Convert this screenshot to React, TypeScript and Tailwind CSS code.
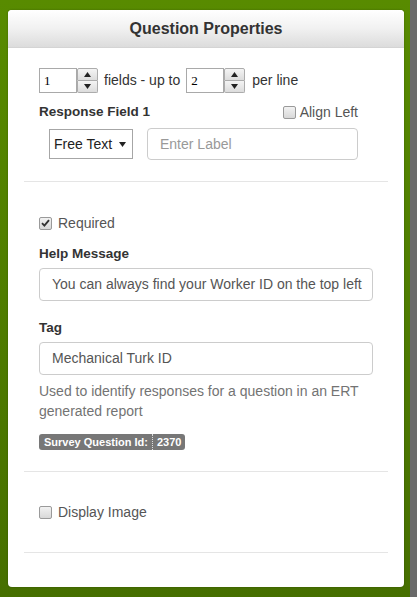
import React from 'react';

function Spinner({ value }: { value: string }) {
  return (
    <div className="flex h-[25px]">
      <div className="w-[38px] h-[25px] border border-[#a9a9a9] bg-white pl-[4px] text-[13px] leading-[23px] text-black font-['Liberation_Serif',serif]">
        {value}
      </div>
      <div className="flex flex-col w-[21px] h-[25px]">
        <div className="flex-1 flex items-center justify-center border border-[#acacac] bg-gradient-to-b from-[#f4f4f4] to-[#dcdcdc] rounded-t-[2px]">
          <svg width="7" height="5" viewBox="0 0 7 5"><path d="M3.5 0L7 5H0z" fill="#222" /></svg>
        </div>
        <div className="flex-1 flex items-center justify-center border border-t-0 border-[#acacac] bg-gradient-to-b from-[#f4f4f4] to-[#dcdcdc] rounded-b-[2px]">
          <svg width="7" height="5" viewBox="0 0 7 5"><path d="M0 0H7L3.5 5z" fill="#222" /></svg>
        </div>
      </div>
    </div>
  );
}

function Checkbox({ checked }: { checked?: boolean }) {
  return (
    <div className="w-[13px] h-[13px] rounded-[2px] border border-[#9a9a9a] bg-gradient-to-b from-[#f2f2f2] to-[#d8d8d8] flex items-center justify-center">
      {checked && (
        <svg width="9" height="8" viewBox="0 0 9 8">
          <path d="M1 4.2L3.4 6.6L8 1.2" stroke="#333" strokeWidth="1.9" fill="none" />
        </svg>
      )}
    </div>
  );
}

function TextInput({ value, placeholder, className = '' }: { value?: string; placeholder?: string; className?: string }) {
  return (
    <div className={`border border-[#cccccc] rounded-[4px] bg-white px-[12px] flex items-center text-[14px] whitespace-nowrap overflow-hidden ${className}`}>
      {value ? <span className="text-[#555555]">{value}</span> : <span className="text-[#999999]">{placeholder}</span>}
    </div>
  );
}

export default function App() {
  return (
    <div className="flex w-[417px] h-[597px] overflow-hidden font-['Liberation_Sans',Arial,sans-serif]">
      <div className="w-[410px] h-full bg-gradient-to-b from-[#588b00] to-[#466f00] pl-[8px] pt-[10px]">
        <div className="w-[396px] h-[577px] bg-white rounded-[4px] overflow-hidden shadow-[0_0_2px_rgba(0,0,0,0.3)]">
          {/* Header */}
          <div className="h-[38px] bg-gradient-to-b from-[#ffffff] via-[#f1f1f1] to-[#dcdcdc] border-b border-[#d4d4d4] flex items-center justify-center">
            <h2 className="text-[16px] font-bold text-[#333333]">Question Properties</h2>
          </div>

          <div className="px-[16px]">
            {/* Fields section */}
            <div className="px-[15px]">
              <div className="mt-[20px] flex items-center text-[14px] text-[#333333]">
                <Spinner value="1" />
                <span className="ml-[6px] mr-[6px]">fields - up to</span>
                <Spinner value="2" />
                <span className="ml-[7px]">per line</span>
              </div>

              <div className="mt-[9px] h-[20px] flex items-start justify-between">
                <span className="text-[13.5px] font-bold text-[#333333] leading-[20px]">Response Field 1</span>
                <label className="flex items-center gap-[4px] mr-[15px] text-[14px] text-[#555555] leading-[20px]">
                  <Checkbox />
                  <span>Align Left</span>
                </label>
              </div>

              <div className="mt-[6px] flex items-center h-[32px]">
                <div className="ml-[10px] w-[84px] h-[30px] border border-[#a6a6a6] bg-white flex items-center justify-between pl-[4px] pr-[6px] text-[14px] text-[#222222]">
                  <span>Free Text</span>
                  <svg width="7" height="5" viewBox="0 0 7 5"><path d="M0 0H7L3.5 5z" fill="#222" /></svg>
                </div>
                <TextInput placeholder="Enter Label" className="ml-[14px] w-[211px] h-[32px]" />
              </div>
            </div>

            <div className="mt-[21px] border-t border-[#e5e5e5]" />

            {/* Main properties */}
            <div className="px-[15px]">
              <label className="mt-[31px] h-[20px] flex items-center gap-[6px] text-[14px] text-[#555555]">
                <Checkbox checked />
                <span>Required</span>
              </label>

              <div className="mt-[11px] h-[20px] text-[13.5px] font-bold text-[#333333] leading-[20px]">Help Message</div>
              <TextInput value="You can always find your Worker ID on the top left" className="mt-[4px] w-[334px] h-[33px]" />

              <div className="mt-[17px] h-[20px] text-[13.5px] font-bold text-[#333333] leading-[20px]">Tag</div>
              <TextInput value="Mechanical Turk ID" className="mt-[4px] w-[334px] h-[33px]" />

              <p className="mt-[6px] text-[14px] leading-[20px] text-[#737373]">
                Used to identify responses for a question in an ERT generated report
              </p>

              <div className="mt-[13px] flex">
                <div className="flex h-[16px] items-center rounded-[3px] bg-[#777777] text-[11px] font-bold text-white leading-none">
                  <span className="pl-[5px] pr-[4px]">Survey Question Id:</span>
                  <span className="w-px h-[16px] border-l border-dotted border-[#dddddd]" />
                  <span className="pl-[4px] pr-[4px]">2370</span>
                </div>
              </div>
            </div>

            <div className="mt-[21px] border-t border-[#e5e5e5]" />

            <div className="px-[15px]">
              <label className="mt-[30px] h-[20px] flex items-center gap-[6px] text-[14px] text-[#555555]">
                <Checkbox />
                <span>Display Image</span>
              </label>
            </div>

            <div className="mt-[30px] border-t border-[#e5e5e5]" />
          </div>
        </div>
      </div>
      <div className="w-[7px] h-full bg-[#6a6a6a]" />
    </div>
  );
}
